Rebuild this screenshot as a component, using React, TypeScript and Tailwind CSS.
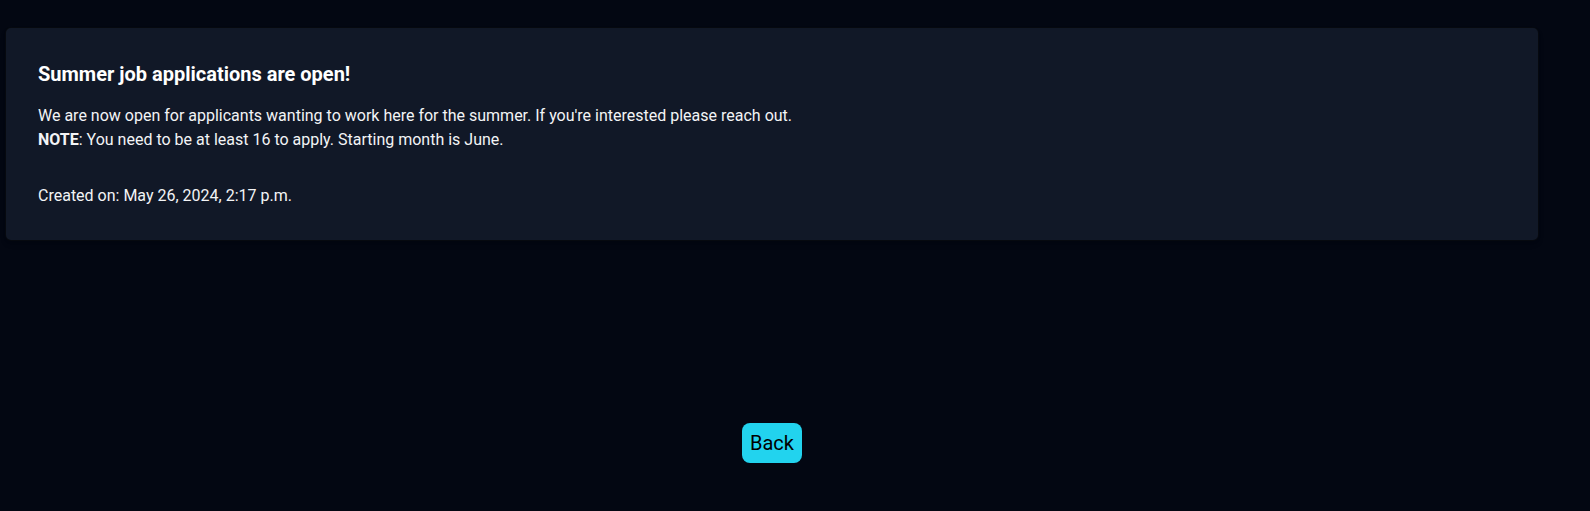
import React from "react";

const App = () => {
  return (
    <div
      className="min-h-screen w-full bg-[#030712] text-white"
      style={{ fontFamily: "Roboto, 'Liberation Sans', sans-serif" }}
    >
      <div className="w-[1544px] px-[5px] pt-[27px]">
        <div className="rounded-md border border-black/60 bg-[#111827] p-8 shadow-md">
          <h2 className="mb-4 text-xl font-bold leading-7">Summer job applications are open!</h2>
          <p className="text-base leading-6 text-gray-100">
            We are now open for applicants wanting to work here for the summer. If you're interested please reach out.
            <br />
            <strong>NOTE</strong>: You need to be at least 16 to apply. Starting month is June.
          </p>
          <p className="mt-8 text-base leading-6 text-gray-100">Created on: May 26, 2024, 2:17 p.m.</p>
        </div>
        <div className="mt-[182px] flex justify-center">
          <button className="rounded-lg bg-[#22d3ee] px-2 py-1.5 text-xl leading-7 text-black">Back</button>
        </div>
      </div>
    </div>
  );
};

export default App;
